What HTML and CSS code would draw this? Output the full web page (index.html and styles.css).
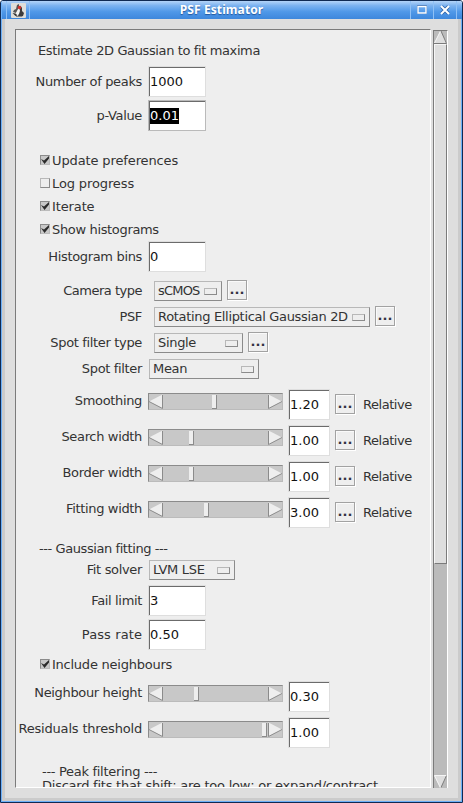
FILE: index.html
```html
<!DOCTYPE html>
<html lang="en">
<head>
<meta charset="utf-8">
<title>PSF Estimator</title>
<link rel="stylesheet" href="styles.css">
</head>
<body>
<div class="window">
  <header class="titlebar">
    <div class="app-icon">
      <svg width="15" height="15" viewBox="0 0 15 15"><rect width="15" height="15" rx="1" fill="#dededa"/><path d="M6 2l2-1v3L6 8l-1 2-3-1 1-2 2-1z" fill="#555"/><path d="M9.500 2.500L11 5v3l2 2-1 3-3 1-2-1 1-3z" fill="#3c3c3c"/><path d="M7.500 6L9 7.500 8 11l-2 1-1-2z" fill="#f4f4f4"/><path d="M1.500 10l3 .5 2 2-2 .500z" fill="#333"/><path d="M5 13.500h6" stroke="#888"/><circle cx="8.500" cy="4.500" r="1.700" fill="#d5312b"/></svg>
    </div>
    <h1 class="title">PSF Estimator</h1>
    <div class="tool"><svg width="10" height="10" viewBox="0 0 10 10"><path d="M.5 .5h9v8h-9z" fill="none" stroke="#2c62a8"/><path d="M1 1.500h8v6.500H1z" fill="none" stroke="#fff" stroke-width="1.400"/></svg></div>
    <div class="tool close"><svg width="10" height="10" viewBox="0 0 10 10"><path d="M1.500 1.500l7 7m0-7l-7 7" stroke="#2c62a8" stroke-width="3.600"/><path d="M1 1l8 8m0-8l-8 8" stroke="#fff" stroke-width="2"/></svg></div>
    <div class="tool-end"></div>
  </header>
  <main class="client">
    <div class="panel">
      <p class="heading intro">Estimate 2D Gaussian to fit maxima</p>

      <div class="row field-row"><label>Number of peaks</label><div class="field wide">1000</div></div>
      <div class="row field-row next"><label>p-Value</label><div class="field wide focused"><span class="selection">0.01</span></div></div>

      <div class="checks">
        <div class="check"><i class="box on"><svg width="10" height="10" viewBox="0 0 10 10"><path d="M1 4l3 1.500L9 1v2.500L4.500 9z" fill="#2b2b2b"/></svg></i><span>Update preferences</span></div>
        <div class="check"><i class="box"></i><span>Log progress</span></div>
        <div class="check"><i class="box on"><svg width="10" height="10" viewBox="0 0 10 10"><path d="M1 4l3 1.500L9 1v2.500L4.500 9z" fill="#2b2b2b"/></svg></i><span>Iterate</span></div>
        <div class="check tight"><i class="box on"><svg width="10" height="10" viewBox="0 0 10 10"><path d="M1 4l3 1.500L9 1v2.500L4.500 9z" fill="#2b2b2b"/></svg></i><span>Show histograms</span></div>
      </div>

      <div class="row field-row"><label>Histogram bins</label><div class="field wide">0</div></div>

      <div class="choices">
        <div class="row choice-row inset"><label class="tighter">Camera type</label><div class="choice camera"><span>sCMOS</span><i></i></div><div class="more">...</div></div>
        <div class="row choice-row inset"><label>PSF</label><div class="choice psf"><span>Rotating Elliptical Gaussian 2D</span><i></i></div><div class="more">...</div></div>
        <div class="row choice-row inset"><label>Spot filter type</label><div class="choice type"><span>Single</span><i></i></div><div class="more">...</div></div>
        <div class="row choice-row"><label>Spot filter</label><div class="choice filter"><span>Mean</span><i></i></div></div>
      </div>

      <div class="sliders first">
        <div class="row slider-row"><label>Smoothing</label><div class="slider"><svg class="arrow" width="14" height="15" viewBox="0 0 14 15"><path d="M0 7.500L13.500 .5v14z" fill="#eee"/><path d="M0 7.500L13.500 14.500V1" fill="none" stroke="#8b8b8b"/></svg><div class="track"><b style="margin-left:49px"></b></div><svg class="arrow" width="14" height="15" viewBox="0 0 14 15"><path d="M14 7.500L.5 .5v14z" fill="#eee"/><path d="M.5 1v13.500L14 7.500" fill="none" stroke="#8b8b8b"/></svg></div><div class="field narrow">1.20</div><div class="more">...</div><span class="unit">Relative</span></div>
        <div class="row slider-row"><label>Search width</label><div class="slider"><svg class="arrow" width="14" height="15" viewBox="0 0 14 15"><path d="M0 7.500L13.500 .5v14z" fill="#eee"/><path d="M0 7.500L13.500 14.500V1" fill="none" stroke="#8b8b8b"/></svg><div class="track"><b style="margin-left:26px"></b></div><svg class="arrow" width="14" height="15" viewBox="0 0 14 15"><path d="M14 7.500L.5 .5v14z" fill="#eee"/><path d="M.5 1v13.500L14 7.500" fill="none" stroke="#8b8b8b"/></svg></div><div class="field narrow">1.00</div><div class="more">...</div><span class="unit">Relative</span></div>
        <div class="row slider-row"><label>Border width</label><div class="slider"><svg class="arrow" width="14" height="15" viewBox="0 0 14 15"><path d="M0 7.500L13.500 .5v14z" fill="#eee"/><path d="M0 7.500L13.500 14.500V1" fill="none" stroke="#8b8b8b"/></svg><div class="track"><b style="margin-left:26px"></b></div><svg class="arrow" width="14" height="15" viewBox="0 0 14 15"><path d="M14 7.500L.5 .5v14z" fill="#eee"/><path d="M.5 1v13.500L14 7.500" fill="none" stroke="#8b8b8b"/></svg></div><div class="field narrow">1.00</div><div class="more">...</div><span class="unit">Relative</span></div>
        <div class="row slider-row"><label>Fitting width</label><div class="slider"><svg class="arrow" width="14" height="15" viewBox="0 0 14 15"><path d="M0 7.500L13.500 .5v14z" fill="#eee"/><path d="M0 7.500L13.500 14.500V1" fill="none" stroke="#8b8b8b"/></svg><div class="track"><b style="margin-left:41px"></b></div><svg class="arrow" width="14" height="15" viewBox="0 0 14 15"><path d="M14 7.500L.5 .5v14z" fill="#eee"/><path d="M.5 1v13.500L14 7.500" fill="none" stroke="#8b8b8b"/></svg></div><div class="field narrow">3.00</div><div class="more">...</div><span class="unit">Relative</span></div>
      </div>

      <p class="heading fitting">--- Gaussian fitting ---</p>
      <div class="row choice-row"><label>Fit solver</label><div class="choice solver"><span>LVM LSE</span><i></i></div></div>
      <div class="row field-row"><label>Fail limit</label><div class="field wide">3</div></div>
      <div class="row field-row next"><label class="loose">Pass rate</label><div class="field wide">0.50</div></div>
      <div class="checks neighbours">
        <div class="check"><i class="box on"><svg width="10" height="10" viewBox="0 0 10 10"><path d="M1 4l3 1.500L9 1v2.500L4.500 9z" fill="#2b2b2b"/></svg></i><span>Include neighbours</span></div>
      </div>
      <div class="sliders">
        <div class="row slider-row"><label>Neighbour height</label><div class="slider"><svg class="arrow" width="14" height="15" viewBox="0 0 14 15"><path d="M0 7.500L13.500 .5v14z" fill="#eee"/><path d="M0 7.500L13.500 14.500V1" fill="none" stroke="#8b8b8b"/></svg><div class="track"><b style="margin-left:31px"></b></div><svg class="arrow" width="14" height="15" viewBox="0 0 14 15"><path d="M14 7.500L.5 .5v14z" fill="#eee"/><path d="M.5 1v13.500L14 7.500" fill="none" stroke="#8b8b8b"/></svg></div><div class="field narrow">0.30</div></div>
        <div class="row slider-row"><label class="snug">Residuals threshold</label><div class="slider"><svg class="arrow" width="14" height="15" viewBox="0 0 14 15"><path d="M0 7.500L13.500 .5v14z" fill="#eee"/><path d="M0 7.500L13.500 14.500V1" fill="none" stroke="#8b8b8b"/></svg><div class="track"><b style="margin-left:99px"></b></div><svg class="arrow" width="14" height="15" viewBox="0 0 14 15"><path d="M14 7.500L.5 .5v14z" fill="#eee"/><path d="M.5 1v13.500L14 7.500" fill="none" stroke="#8b8b8b"/></svg></div><div class="field narrow">1.00</div></div>
      </div>
      <p class="heading peak">--- Peak filtering ---</p>
      <p class="heading discard">Discard fits that shift; are too low; or expand/contract</p>
    </div>
    <div class="scrollbar">
      <svg width="13" height="13" viewBox="0 0 13 13"><path d="M6.500 0L0 12.500h13z" fill="#dedede"/><path d="M6.500 0L.5 12" stroke="#f5f5f5"/><path d="M7 0l5.500 12.500H0" fill="none" stroke="#7b7b7b"/></svg>
      <div class="thumb"></div>
      <svg class="down" width="13" height="13" viewBox="0 0 13 13"><path d="M0 .5h13L6.500 13z" fill="#dedede"/><path d="M13 .5H.5L6.500 13" fill="none" stroke="#f5f5f5"/><path d="M12.500 .5L7 12.500" stroke="#7b7b7b"/></svg>
    </div>
  </main>
</div>
</body>
</html>
```
FILE: styles.css
```css
* { box-sizing: border-box; }
body {
  margin: 0;
  width: 463px;
  height: 803px;
  overflow: hidden;
  background: #fff;
  font: 13px/16px "DejaVu Sans", sans-serif;
  color: #333;
}
p, h1 { margin: 0; }
svg { display: block; flex: none; }
.window {
  height: 803px;
  display: flex;
  flex-direction: column;
  border: 1px solid #102a52;
  border-radius: 3px 3px 0 0;
  overflow: hidden;
}
.titlebar {
  flex: none;
  height: 18px;
  display: flex;
  align-items: center;
  background: linear-gradient(#b4d4f8, #7db3f0 25%, #4f98e8 60%, #3d87dc);
  border-left: 1px solid #6cb0f8;
}
.app-icon {
  width: 24px;
  height: 18px;
  margin-left: 4px;
  padding: 2px 0 0 4px;
  border-left: 1px solid #8fc0f5;
  border-right: 1px solid #8fc0f5;
}
.title {
  flex: 1;
  font: bold 12px/18px "Noto Sans", sans-serif;
  letter-spacing: 0.1px;
  text-align: center;
  text-indent: 3px;
  color: #fff;
  text-shadow: 0 1px 1px #23579c;
  white-space: nowrap;
}
.tool {
  width: 23px;
  height: 18px;
  display: flex;
  align-items: center;
  justify-content: center;
  border-left: 1px solid #8fc0f5;
}
.tool-end { width: 6px; height: 18px; border-left: 1px solid #8fc0f5; }
.client {
  flex: 1;
  min-height: 0;
  display: flex;
  border: 1px solid #6cb0f8;
  border-top: 0;
  background: #dedede;
  box-shadow: inset 3px 0 #cbcbcb, inset -3px -3px #cbcbcb;
  padding: 10px 12px 13px 13px;
}
.panel {
  width: 416px;
  height: 759px;
  overflow: hidden;
  background: #eee;
  border: 1px solid #7b7b7b;
  border-right-color: #fff;
  border-bottom-color: #fff;
}
.heading { height: 16px; white-space: nowrap; }
.intro { margin: 13px 0 7px 22px; letter-spacing: -0.38px; }
.fitting { margin: 8px 0 2px 23px; letter-spacing: -0.42px; }
.peak { margin: 11px 0 0 26px; letter-spacing: -0.3px; }
.discard { margin: -2px 0 0 26px; letter-spacing: -0.24px; }
.row { display: flex; align-items: flex-start; }
label { width: 126px; flex: none; text-align: right; white-space: nowrap; letter-spacing: -0.34px; }
label.tighter { letter-spacing: -0.5px; }
label.snug { letter-spacing: -0.18px; }
label.loose { letter-spacing: 0.1px; }
.field {
  flex: none;
  height: 31px;
  background: #fff;
  border: 1px solid #dedede;
  box-shadow: inset 1px 1px #6b6b6b;
  padding: 7px 0 0 1px;
  color: #111;
}
.wide { width: 58px; margin-left: 6px; }
.narrow { width: 42px; margin-left: 5px; }
.focused { border-color: #bababa; }
.selection { display: block; width: 29px; background: #000; color: #fff; }
.field-row { height: 31px; }
.field-row label { padding-top: 8px; }
.next { margin-top: 3px; }
.checks { margin-top: 18px; }
.check { height: 23px; display: flex; padding-left: 24px; letter-spacing: -0.12px; }
.tight { letter-spacing: -0.34px; }
.neighbours { margin-top: 4px; margin-bottom: 5px; }
.neighbours .check { height: 22px; letter-spacing: -0.24px; }
.neighbours .check .box { margin-top: 5px; }
.box {
  width: 10px;
  height: 10px;
  margin: 6px 2px 0 0;
  border: 1px solid #b8b8b8;
  border-right-color: #8b8b8b;
  border-bottom-color: #8b8b8b;
}
.box svg { margin: -1px; }
.box.on { background: #c8c8c8; border-color: #8b8b8b #bbb #bbb #8b8b8b; }
.check span { margin-top: 4px; }
.neighbours .check span { margin-top: 3px; }
.choices { margin-top: 8px; }
.choice-row { height: 26px; }
.choice-row label { padding-top: 3px; }
.choice {
  height: 20px;
  margin: 1px 0 0 7px;
  display: flex;
  align-items: center;
  justify-content: space-between;
  padding: 0 4px 0 3px;
  border: 1px solid #b8b8b8;
  border-right-color: #8b8b8b;
  border-bottom-color: #8b8b8b;
  white-space: nowrap;
  letter-spacing: -0.32px;
}
.choice i {
  flex: none;
  width: 13px;
  height: 7px;
  border: 1px solid #b8b8b8;
  border-right-color: #8b8b8b;
  border-bottom-color: #8b8b8b;
}
.inset .choice { margin-left: 12px; }
.choice.camera { width: 68px; letter-spacing: -0.8px; }
.psf { width: 216px; }
.type { width: 89px; }
.filter { width: 110px; }
.solver { width: 86px; }
.more {
  flex: none;
  width: 20px;
  height: 20px;
  margin-left: 5px;
  border: 1px solid #a2a2a2;
  box-shadow: 1px 1px #fff, inset 1px 1px #fafafa;
  color: #334;
  font-weight: bold;
  line-height: 17px;
  text-align: center;
}
.first { margin-top: 5px; }
.slider-row { height: 36px; }
.slider-row label { padding-top: 4px; }
.slider-row .more { margin-top: 5px; }
.slider {
  width: 135px;
  height: 17px;
  margin: 4px 0 0 6px;
  display: flex;
  background: #c8c8c8;
  border: 1px solid #8b8b8b;
  border-right-color: #bbb;
  border-bottom-color: #bbb;
}
.track { flex: 1; height: 15px; padding-top: 1px; }
.track b {
  display: block;
  width: 5px;
  height: 14px;
  background: #eee;
  border-right: 1px solid #8b8b8b;
  border-bottom: 1px solid #8b8b8b;
}
.unit { margin: 8px 0 0 8px; letter-spacing: -0.45px; }
.scrollbar {
  width: 15px;
  height: 758px;
  margin: 1px 0 0 2px;
  display: flex;
  flex-direction: column;
  background: #bbb;
  border: 1px solid #7b7b7b;
  border-right-color: #fff;
  border-bottom: 0;
}
.thumb {
  height: 520px;
  background: #dedede;
  border: 1px solid #f5f5f5;
  border-right-color: #7b7b7b;
  border-bottom-color: #7b7b7b;
}
.down { margin-top: auto; }
```
